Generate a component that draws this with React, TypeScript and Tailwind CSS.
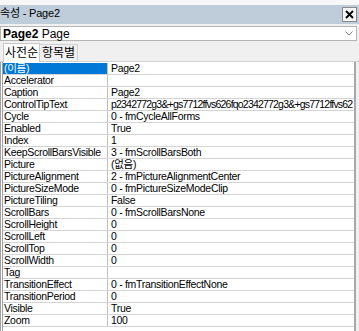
import React from "react";

const rows: [string, string][] = [
  ["(이름)", "Page2"],
  ["Accelerator", ""],
  ["Caption", "Page2"],
  ["ControlTipText", "p2342772g3&+gs7712ffvs626fqo2342772g3&+gs7712ffvs62"],
  ["Cycle", "0 - fmCycleAllForms"],
  ["Enabled", "True"],
  ["Index", "1"],
  ["KeepScrollBarsVisible", "3 - fmScrollBarsBoth"],
  ["Picture", "(없음)"],
  ["PictureAlignment", "2 - fmPictureAlignmentCenter"],
  ["PictureSizeMode", "0 - fmPictureSizeModeClip"],
  ["PictureTiling", "False"],
  ["ScrollBars", "0 - fmScrollBarsNone"],
  ["ScrollHeight", "0"],
  ["ScrollLeft", "0"],
  ["ScrollTop", "0"],
  ["ScrollWidth", "0"],
  ["Tag", ""],
  ["TransitionEffect", "0 - fmTransitionEffectNone"],
  ["TransitionPeriod", "0"],
  ["Visible", "True"],
  ["Zoom", "100"],
];

export default function App() {
  return (
    <div
      className="w-[359px] h-[331px] bg-[#f0f0f0] overflow-hidden flex flex-col text-[11px] text-black"
      style={{ fontFamily: '"Liberation Sans", "Noto Sans CJK KR", sans-serif' }}
    >
      <div className="h-[5px] bg-[#f7f7f7] shrink-0" />
      <div className="h-[19px] bg-[#bfcddb] flex items-center justify-between shrink-0 pl-0 pr-[2px]">
        <span className="leading-none -mt-[2px] tracking-[-0.2px]">속성 - Page2</span>
        <div className="w-[15px] h-[15px] bg-[#f4f4f4] border border-[#8a8a8a] flex items-center justify-center">
          <svg width="9" height="9" viewBox="0 0 9 9">
            <path d="M1 1 L8 8 M8 1 L1 8" stroke="#000" strokeWidth="1.8" />
          </svg>
        </div>
      </div>
      <div className="h-[2px] shrink-0" />
      <div className="h-[15px] mr-[2px] bg-white border border-[#b4b4b4] flex items-center justify-between shrink-0 pl-[2px] pr-[3px]">
        <span className="text-[12px] leading-none">
          <b>Page2</b> Page
        </span>
        <svg width="8" height="5" viewBox="0 0 8 5">
          <path d="M0.5 0.5 L4 4 L7.5 0.5" stroke="#888" fill="none" strokeWidth="1" />
        </svg>
      </div>
      <div className="h-[21px] flex items-end pl-[3px] shrink-0 border-b border-[#d0d0d0]">
        <div className="h-[19px] w-[37px] bg-white border border-b-0 border-[#c8c8c8] flex items-center justify-center text-[12px] -mb-px">
          사전순
        </div>
        <div className="h-[17px] w-[38px] bg-[#f0f0f0] border border-b-0 border-l-0 border-[#d0d0d0] flex items-center justify-center text-[12px]">
          항목별
        </div>
      </div>
      <div className="flex-1 mr-[3px] bg-white border-l-[3px] border-double border-[#a0a0a0] border-r-2 border-r-[#a8a8a8] pt-[1px] overflow-hidden text-[10.5px] tracking-[-0.3px]">
        {rows.map(([k, v], i) => (
          <div key={k} className="h-[12px] flex border-b border-[#d4d4d4] leading-[11px]">
            <div
              className={
                "w-[105px] shrink-0 border-r border-[#c0c0c0] pl-[1px] whitespace-nowrap overflow-hidden " +
                (i === 0 ? "bg-[#0078d7] text-white" : "")
              }
            >
              {k}
            </div>
            <div
              className={
                "flex-1 pl-[3px] whitespace-nowrap overflow-hidden " +
                (k === "ControlTipText" ? "tracking-[-0.8px]" : "")
              }
            >
              {v}
            </div>
          </div>
        ))}
      </div>
    </div>
  );
}
